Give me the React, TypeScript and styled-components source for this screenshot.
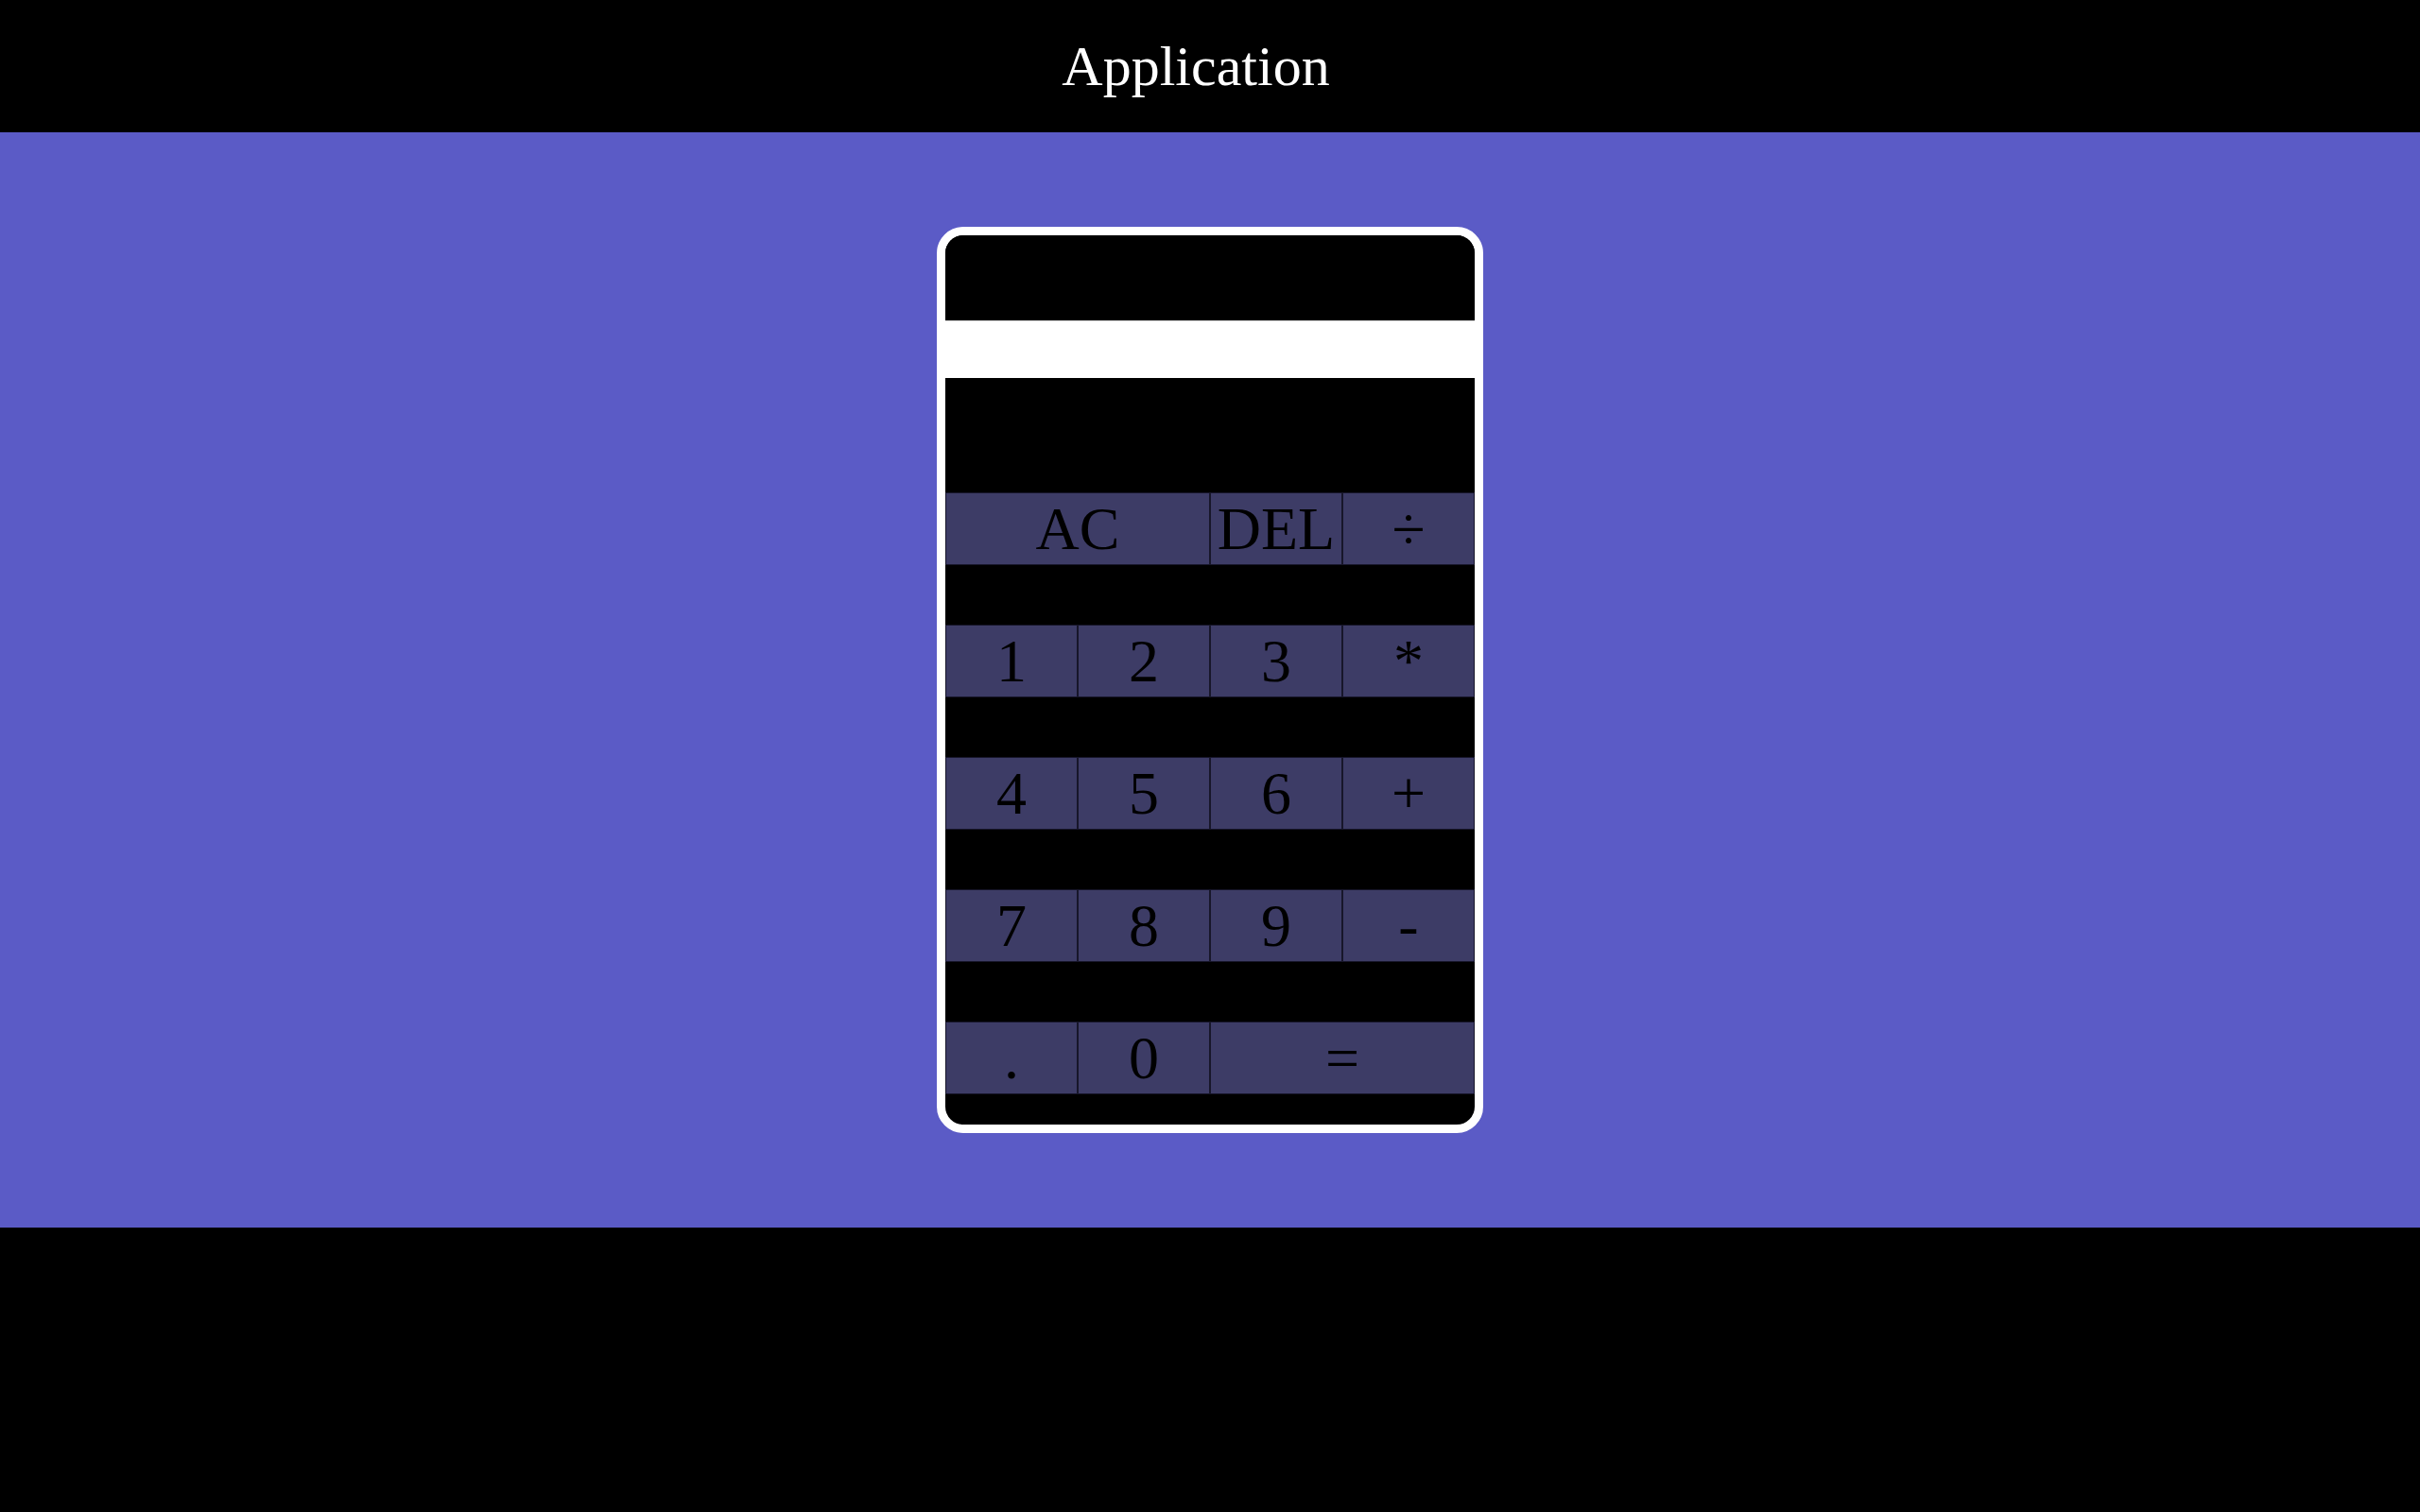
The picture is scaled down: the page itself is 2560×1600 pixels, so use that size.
import React, { useState } from "react";
import styled, { createGlobalStyle } from "styled-components";

const GlobalStyle = createGlobalStyle`
  html, body {
    margin: 0;
    padding: 0;
    background: #000;
    font-family: "Liberation Serif", "Times New Roman", serif;
  }
  * { box-sizing: border-box; }
`;

const Header = styled.header`
  height: 140px;
  display: flex;
  align-items: center;
  justify-content: center;
  padding-right: 30px;
  background: #000;
  color: #fff;
`;

const Title = styled.h1`
  margin: 0;
  font-size: 60px;
  font-weight: 400;
  line-height: normal;
`;

const Main = styled.main`
  background: #5b5bc6;
  padding: 100px 0;
  display: flex;
  justify-content: center;
`;

const Calculator = styled.div`
  width: 578px;
  border: 9px solid #fff;
  border-radius: 28px;
  background: #000;
  overflow: hidden;
  display: flex;
  flex-direction: column;
`;

const Screen = styled.div`
  height: 90px;
  background: #000;
`;

const Display = styled.input`
  display: block;
  width: 100%;
  height: 61px;
  margin: 0;
  padding: 0 10px;
  border: none;
  border-top: 1px solid #cfcfcf;
  background: #fff;
  outline: none;
  font-family: inherit;
  font-size: 40px;
`;

const Keypad = styled.div`
  display: grid;
  grid-template-columns: repeat(4, 140px);
  row-gap: 63px;
  padding: 121px 0 32px;
`;

const Key = styled.button<{ $span?: number }>`
  grid-column: span ${(p) => p.$span ?? 1};
  height: 77px;
  margin: 0;
  padding: 0;
  border: 1px solid #17162a;
  background: #3d3c66;
  color: #000;
  font-family: "Liberation Serif", "Times New Roman", serif;
  font-size: 64px;
  line-height: normal;
  cursor: pointer;
`;

const keys: { label: string; span?: number }[] = [
  { label: "AC", span: 2 },
  { label: "DEL" },
  { label: "÷" },
  { label: "1" },
  { label: "2" },
  { label: "3" },
  { label: "*" },
  { label: "4" },
  { label: "5" },
  { label: "6" },
  { label: "+" },
  { label: "7" },
  { label: "8" },
  { label: "9" },
  { label: "-" },
  { label: "." },
  { label: "0" },
  { label: "=", span: 2 },
];

export default function App() {
  const [value, setValue] = useState("");
  return (
    <>
      <GlobalStyle />
      <Header>
        <Title>Application</Title>
      </Header>
      <Main>
        <Calculator>
          <Screen />
          <Display value={value} onChange={(e) => setValue(e.target.value)} />
          <Keypad>
            {keys.map((k) => (
              <Key key={k.label} $span={k.span}>
                {k.label}
              </Key>
            ))}
          </Keypad>
        </Calculator>
      </Main>
    </>
  );
}
